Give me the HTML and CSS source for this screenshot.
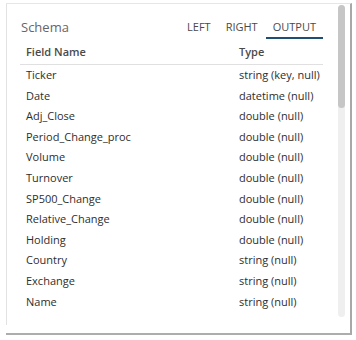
FILE: index.html
```html
<!DOCTYPE html>
<html lang="en">
<head>
    <meta charset="UTF-8">
    <meta name="viewport" content="width=device-width, initial-scale=1.0">
    <title>Schema</title>
    <link rel="stylesheet" href="styles.css">
</head>
<body>
    <div class="panel">
        <div class="content">
            <div class="panel-head">
                <div class="panel-title">Schema</div>
                <div class="tabs">
                    <div class="tab">LEFT</div>
                    <div class="tab">RIGHT</div>
                    <div class="tab active">OUTPUT</div>
                </div>
            </div>
            <div class="schema-table">
                <div class="th">Field Name</div>
                <div class="th">Type</div>

                <div class="td">Ticker</div>
                <div class="td">string (key, null)</div>
                <div class="td">Date</div>
                <div class="td">datetime (null)</div>
                <div class="td">Adj_Close</div>
                <div class="td">double (null)</div>
                <div class="td">Period_Change_proc</div>
                <div class="td">double (null)</div>
                <div class="td">Volume</div>
                <div class="td">double (null)</div>
                <div class="td">Turnover</div>
                <div class="td">double (null)</div>
                <div class="td">SP500_Change</div>
                <div class="td">double (null)</div>
                <div class="td">Relative_Change</div>
                <div class="td">double (null)</div>
                <div class="td">Holding</div>
                <div class="td">double (null)</div>
                <div class="td">Country</div>
                <div class="td">string (null)</div>
                <div class="td">Exchange</div>
                <div class="td">string (null)</div>
                <div class="td">Name</div>
                <div class="td">string (null)</div>
            </div>
        </div>
        <div class="scrollbar">
            <div class="scroll-thumb"></div>
        </div>
    </div>
</body>
</html>
```

FILE: styles.css
```css
body {
    margin: 0;
    padding: 0;
    background-color: #ffffff;
    font-family: "Open Sans", "Noto Sans", Arial, sans-serif;
    color: #333;
}

.panel {
    box-sizing: border-box;
    margin: 3px 0 0 6px;
    width: 346px;
    height: 332px;
    border-top: 1px solid #e6e6e6;
    border-right: 2px solid #a8a8a8;
    border-bottom: 2px solid #adadad;
    display: flex;
    overflow: hidden;
}

.content {
    flex: 1;
    margin-bottom: 8px;
    padding: 0 15px 0 13px;
    border-left: 1px solid #e2e2e2;
}

.panel-head {
    height: 35px;
    display: flex;
    justify-content: space-between;
    align-items: flex-end;
}

.panel-title {
    font-size: 13px;
    line-height: 18px;
    color: #666;
    padding: 0 0 3px 1px;
}

.tabs {
    display: flex;
    gap: 1px;
}

.tab {
    font-size: 11px;
    line-height: 15px;
    color: #4a4a4a;
    padding: 0 7px 3px 7px;
    border-bottom: 2px solid transparent;
}

.tab.active {
    border-bottom-color: #1d4e74;
}

.schema-table {
    display: grid;
    grid-template-columns: 213px 1fr;
}

.th {
    font-size: 11px;
    font-weight: 600;
    line-height: 15px;
    color: #4a4a4a;
    padding: 5px 0 5px 6px;
    border-bottom: 1px solid #e0e0e0;
}

.td {
    font-size: 11px;
    line-height: 20.6px;
    color: #2e2e2e;
    padding-left: 6px;
    white-space: nowrap;
}

.scrollbar {
    width: 7px;
    height: 312px;
    margin: 1px 5px 0 0;
    border-radius: 4px;
    background-color: #efefef;
}

.scroll-thumb {
    height: 103px;
    border-radius: 4px;
    background-color: #c6c6c6;
}
```
